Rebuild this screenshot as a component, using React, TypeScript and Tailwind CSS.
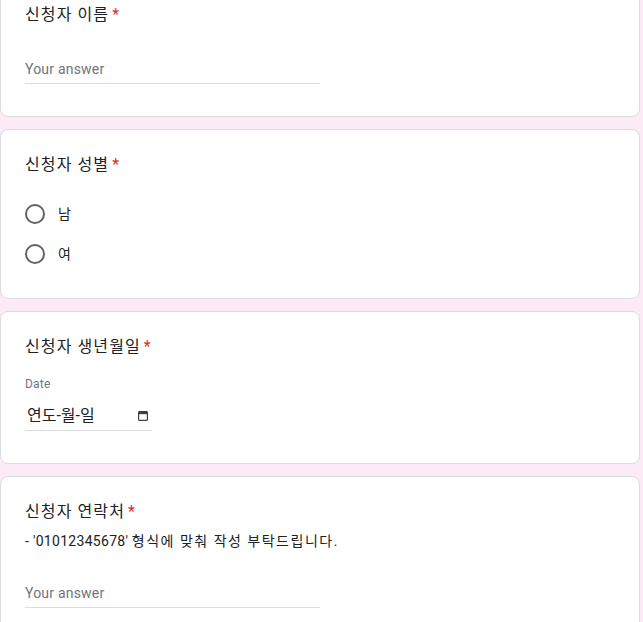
import React from 'react'

const font = { fontFamily: 'Roboto, "Noto Sans CJK KR", "Noto Sans", sans-serif' }

const Title = ({ children }: { children: React.ReactNode }) => (
  <div className="text-[16px] leading-6 text-[#202124] tracking-[1.1px]">
    {children}
    <span className="pl-[3px] text-[#d93025]">*</span>
  </div>
)

const Card = ({ className, children }: { className?: string; children: React.ReactNode }) => (
  <div className={`rounded-lg border border-[#dadce0] bg-white px-6 pt-[23px] ${className ?? ''}`}>
    {children}
  </div>
)

const TextAnswer = ({ className }: { className?: string }) => (
  <div className={`flex h-7 w-[295px] items-center border-b border-[#dadce0] ${className ?? ''}`}>
    <span className="text-[14px] tracking-[0.2px] text-[#70757a]">Your answer</span>
  </div>
)

const Radio = ({ label }: { label: string }) => (
  <div className="flex h-10 items-center">
    <span className="h-5 w-5 rounded-full border-2 border-[#5f6368]" />
    <span className="ml-[13px] text-[14px] text-[#202124]">{label}</span>
  </div>
)

const CalendarIcon = () => (
  <svg width="10" height="10" viewBox="0 0 10 10" className="shrink-0">
    <rect x="0.6" y="0.6" width="8.8" height="8.8" rx="1" fill="none" stroke="#3c4043" strokeWidth="1.2" />
    <rect x="0.6" y="0.6" width="8.8" height="2.6" fill="#3c4043" />
  </svg>
)

export default function App() {
  return (
    <div className="min-h-screen bg-[#fcebf7]" style={font}>
      <div className="-mt-[21px] flex w-[640px] flex-col gap-3 pb-10">
        <Card className="pb-8">
          <Title>신청자 이름</Title>
          <TextAnswer className="mt-[29px]" />
        </Card>

        <Card className="pb-6">
          <Title>신청자 성별</Title>
          <div className="mt-[17px]">
            <Radio label="남" />
            <Radio label="여" />
          </div>
        </Card>

        <Card className="pb-8">
          <Title>신청자 생년월일</Title>
          <div className="mt-[17px] text-[12px] leading-4 tracking-[0.2px] text-[#70757a]">Date</div>
          <div className="mt-[9px] flex h-[30px] w-[127px] items-center justify-between border-b border-[#dadce0] pl-[2px] pr-[4px]">
            <span className="text-[16px] text-[#202124]">연도-월-일</span>
            <CalendarIcon />
          </div>
        </Card>

        <Card className="pb-8">
          <Title>신청자 연락처</Title>
          <div className="mt-[7px] text-[14px] leading-5 text-[#202124]">
            <span className="tracking-[0.3px]">- '01012345678'</span>{' '}
            <span className="tracking-[1.5px]">형식에 맞춰 작성 부탁드립니다.</span>
          </div>
          <TextAnswer className="mt-[29px]" />
        </Card>
      </div>
    </div>
  )
}
